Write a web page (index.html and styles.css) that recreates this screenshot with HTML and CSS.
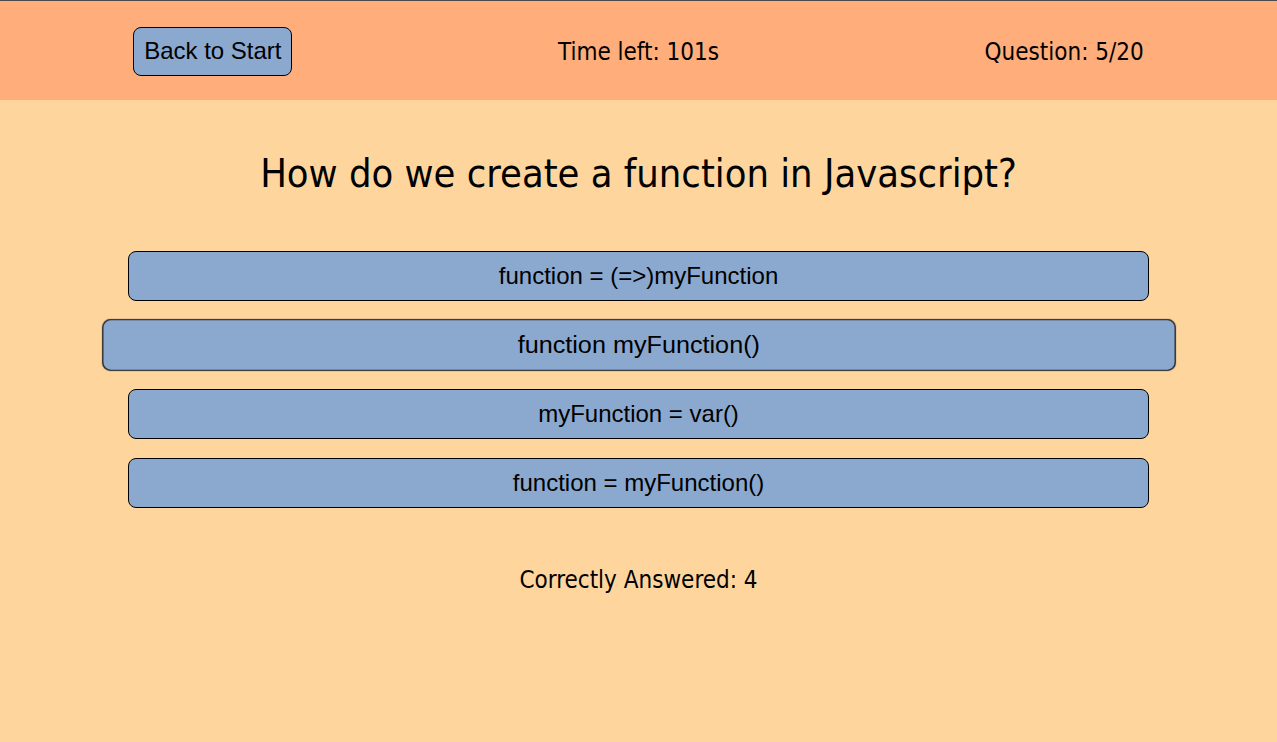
FILE: index.html
```html
<!DOCTYPE html>
<html lang="en">
<head>
<meta charset="utf-8">
<title>Quiz</title>
<link rel="stylesheet" href="styles.css">
</head>
<body>
<header class="topbar">
  <div class="topbar-cell"><button class="back-btn">Back to Start</button></div>
  <div class="topbar-cell"><span class="info">Time left: 101s</span></div>
  <div class="topbar-cell"><span class="info">Question: 5/20</span></div>
</header>
<main class="quiz">
  <h1 class="question">How do we create a function in Javascript?</h1>
  <div class="answers">
    <button class="answer">function = (=&gt;)myFunction</button>
    <button class="answer answer-hover">function myFunction()</button>
    <button class="answer">myFunction = var()</button>
    <button class="answer">function = myFunction()</button>
  </div>
  <p class="score">Correctly Answered: 4</p>
</main>
</body>
</html>
```
FILE: styles.css
```css
html, body {
  margin: 0;
  padding: 0;
  height: 100%;
}
body {
  background: #ffd59e;
  border-top: 1px solid #4a4a4a;
  box-sizing: border-box;
  font-family: "DejaVu Sans Condensed", "DejaVu Sans", sans-serif;
  color: #000;
}
.topbar {
  display: flex;
  align-items: center;
  height: 99px;
  background: #ffad7a;
}
.topbar-cell {
  flex: 1;
  display: flex;
  justify-content: center;
  align-items: center;
}
.back-btn {
  font-family: "Liberation Sans", Arial, sans-serif;
  font-size: 24px;
  color: #000;
  background: #8ba8cf;
  border: 1px solid #000;
  border-radius: 8px;
  width: 159px;
  height: 49px;
  padding: 0;
  margin-top: 1px;
}
.info {
  font-size: 24px;
  line-height: 28px;
  margin-top: 2px;
}
.quiz {
  display: flex;
  flex-direction: column;
  align-items: center;
}
.question {
  font-weight: normal;
  font-size: 39.5px;
  margin: 50px 0 0;
  line-height: 46px;
}
.answers {
  width: 80%;
  display: flex;
  flex-direction: column;
  gap: 19px;
  margin-top: 55px;
}
.answer {
  font-family: "Liberation Sans", Arial, sans-serif;
  font-size: 24px;
  color: #000;
  background: #8ba8cf;
  border: 1px solid #000;
  border-radius: 8px;
  height: 50px;
  padding: 0;
}
.answer-hover {
  transform: scale(1.05, 1.03);
  border-color: #333;
  box-shadow: 0 0 1px #333;
}
.score {
  font-size: 24px;
  line-height: 28px;
  margin: 58px 0 0;
}
```
